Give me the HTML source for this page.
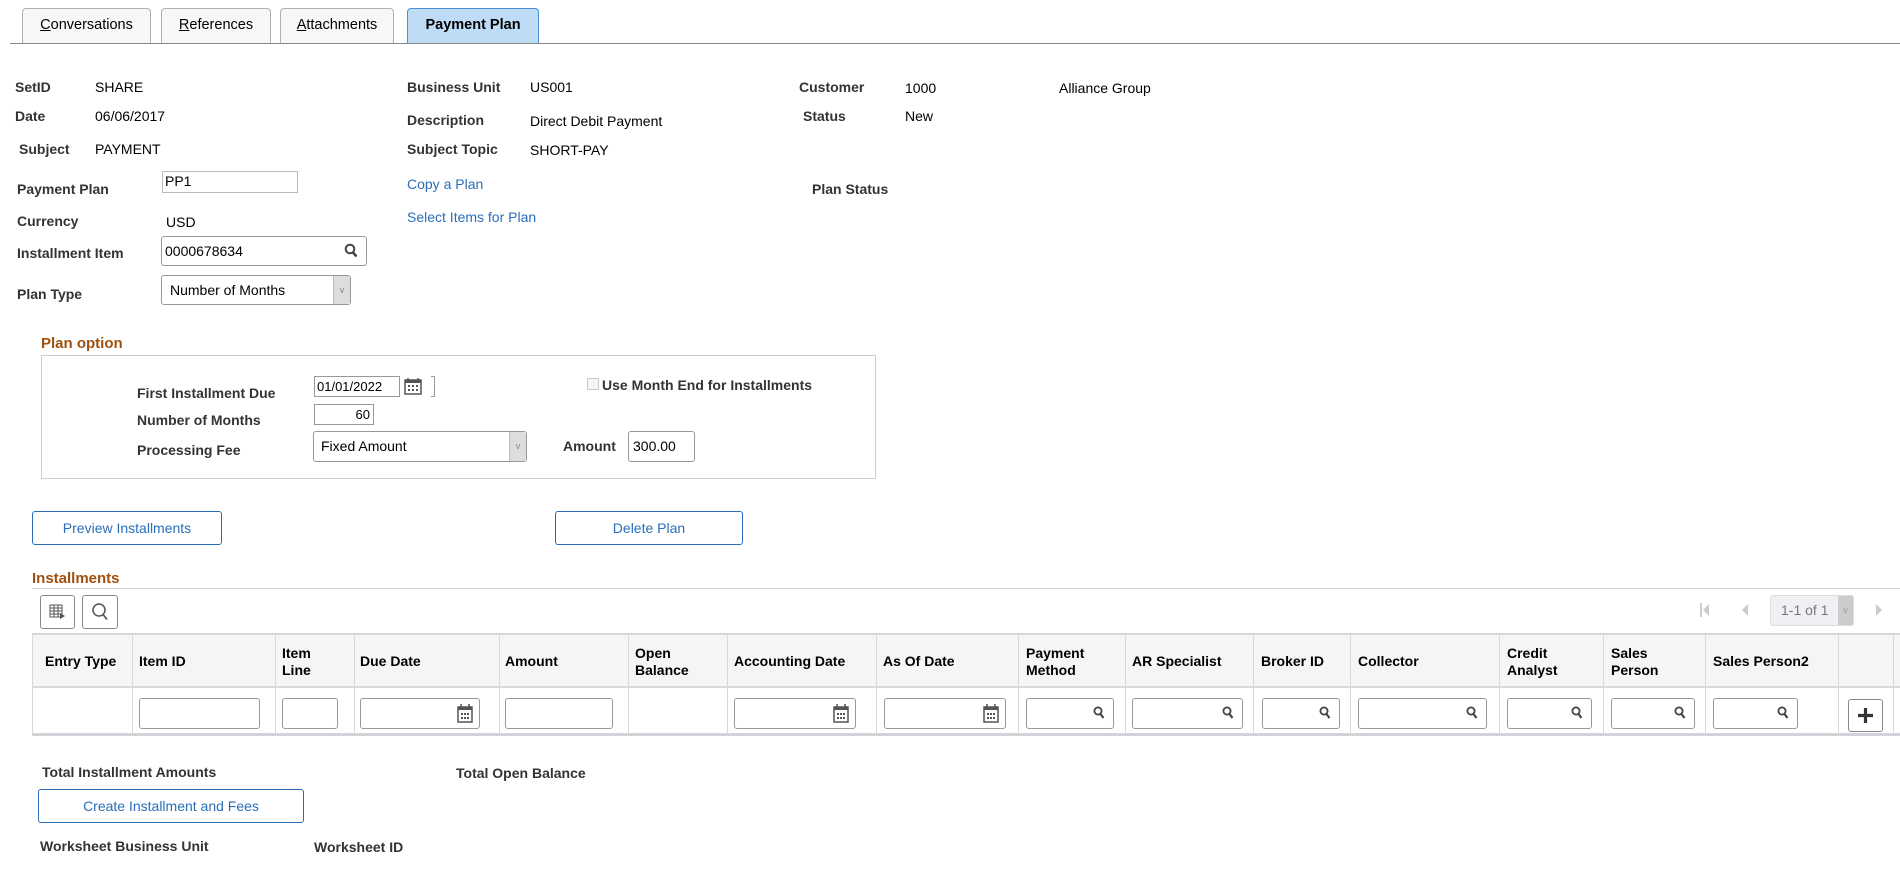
<!DOCTYPE html>
<html><head><meta charset="utf-8"><style>
*{box-sizing:border-box;margin:0;padding:0}
body{width:1900px;height:869px;background:#fff;font-family:"Liberation Sans",Arial,sans-serif;font-size:14px;color:#000;position:relative;overflow:hidden}
.a{position:absolute;line-height:16px;white-space:nowrap}
.l{font-weight:bold;color:#333}
.lk{color:#2a6ebb}
.tab{position:absolute;top:8px;height:35px;border:1px solid #b0b0b0;border-bottom:none;border-radius:4px 4px 0 0;background:#f7f7f7;text-align:center;line-height:33px;font-size:14.5px;color:#000}
.tab u{text-decoration:underline}
.inp{position:absolute;border:1px solid #999;border-radius:3px;background:#fff;padding-left:4px;font-size:14px}
.btn{position:absolute;border:1px solid #2a6ebb;border-radius:3px;background:#fff;color:#2a6ebb;text-align:center;font-size:14px}
.h{position:absolute;color:#a0500e;font-weight:bold;font-size:15px}
.col{position:absolute;top:633px;height:103px;border-left:1px solid #d8d8d8}
.hd{position:absolute;font-weight:bold;font-size:14px;line-height:17px;color:#000}
.srch{position:absolute;right:8px;top:7px}
</style></head><body>
<div class="tab" style="left:22px;width:129px"><u>C</u>onversations</div>
<div class="tab" style="left:161px;width:110px"><u>R</u>eferences</div>
<div class="tab" style="left:280px;width:114px"><u>A</u>ttachments</div>
<div class="tab" style="left:407px;width:132px;background:#bfdcf7;border-color:#4a8fd6;font-weight:bold">Payment Plan</div>
<div style="position:absolute;left:10px;top:43px;width:1890px;height:1px;background:#888"></div>

<div class="a l" style="left:15px;top:79px">SetID</div><div class="a" style="left:95px;top:79px">SHARE</div>
<div class="a l" style="left:15px;top:108px">Date</div><div class="a" style="left:95px;top:108px">06/06/2017</div>
<div class="a l" style="left:19px;top:141px">Subject</div><div class="a" style="left:95px;top:141px">PAYMENT</div>
<div class="a l" style="left:407px;top:79px">Business Unit</div><div class="a" style="left:530px;top:79px">US001</div>
<div class="a l" style="left:407px;top:112px">Description</div><div class="a" style="left:530px;top:113px">Direct Debit Payment</div>
<div class="a l" style="left:407px;top:141px">Subject Topic</div><div class="a" style="left:530px;top:142px">SHORT-PAY</div>
<div class="a l" style="left:799px;top:79px">Customer</div><div class="a" style="left:905px;top:80px">1000</div><div class="a" style="left:1059px;top:80px">Alliance Group</div>
<div class="a l" style="left:803px;top:108px">Status</div><div class="a" style="left:905px;top:108px">New</div>

<div class="a l" style="left:17px;top:181px">Payment Plan</div>
<div class="inp" style="left:162px;top:171px;width:136px;height:22px;border-color:#bbb;border-radius:0;line-height:18px;padding-left:2px">PP1</div>
<div class="a lk" style="left:407px;top:176px">Copy a Plan</div>
<div class="a l" style="left:812px;top:181px">Plan Status</div>
<div class="a l" style="left:17px;top:213px">Currency</div><div class="a" style="left:166px;top:214px">USD</div>
<div class="a lk" style="left:407px;top:209px">Select Items for Plan</div>
<div class="a l" style="left:17px;top:245px">Installment Item</div>
<div class="inp" style="left:161px;top:236px;width:206px;height:30px;line-height:28px;padding-left:3px">0000678634
<svg class="srch" width="14" height="15" viewBox="0 0 14 15" style="top:6px"><circle cx="6" cy="6" r="4.3" fill="none" stroke="#444" stroke-width="2"/><path d="M9 9.5l3.5 4" stroke="#444" stroke-width="2.5"/></svg></div>
<div class="a l" style="left:17px;top:286px">Plan Type</div>
<div class="inp" style="left:161px;top:275px;width:190px;height:30px;line-height:28px;padding-left:8px">Number of Months<div style="position:absolute;right:0;top:0;width:17px;height:28px;background:#ddd;border-left:1px solid #bbb;color:#888;font-size:9px;text-align:center">v</div></div>

<div class="h" style="left:41px;top:335px">Plan option</div>
<div style="position:absolute;left:41px;top:355px;width:835px;height:124px;border:1px solid #ccc"></div>
<div class="a l" style="left:137px;top:385px">First Installment Due</div>
<div class="inp" style="left:314px;top:376px;width:86px;height:21px;line-height:19px;border-radius:0;padding-left:2px;font-size:13px">01/01/2022</div>
<svg style="position:absolute;left:404px;top:377px" width="18" height="18" viewBox="0 0 18 18"><rect x="1" y="3" width="16" height="14" fill="none" stroke="#555" stroke-width="1.5"/><rect x="1" y="3" width="16" height="3" fill="#555"/><path d="M4 1v4M14 1v4" stroke="#555" stroke-width="1.5"/><g fill="#555"><rect x="4" y="8" width="2" height="2"/><rect x="8" y="8" width="2" height="2"/><rect x="12" y="8" width="2" height="2"/><rect x="4" y="12" width="2" height="2"/><rect x="8" y="12" width="2" height="2"/><rect x="12" y="12" width="2" height="2"/></g></svg>
<div style="position:absolute;left:431px;top:376px;width:4px;height:21px;border:1px solid #999;border-left:none"></div>
<div style="position:absolute;left:587px;top:378px;width:12px;height:12px;border:1px solid #ccc;background:#f4f4f4"></div>
<div class="a l" style="left:602px;top:377px">Use Month End for Installments</div>
<div class="a l" style="left:137px;top:412px">Number of Months</div>
<div class="inp" style="left:314px;top:404px;width:60px;height:21px;line-height:19px;border-radius:0;text-align:right;padding-right:3px;font-size:13px">60</div>
<div class="a l" style="left:137px;top:442px">Processing Fee</div>
<div class="inp" style="left:313px;top:431px;width:214px;height:31px;line-height:29px;padding-left:7px">Fixed Amount<div style="position:absolute;right:0;top:0;width:17px;height:29px;background:#ddd;border-left:1px solid #bbb;color:#888;font-size:9px;text-align:center">v</div></div>
<div class="a l" style="left:563px;top:438px">Amount</div>
<div class="inp" style="left:628px;top:431px;width:67px;height:31px;line-height:29px;padding-left:4px">300.00</div>

<div class="btn" style="left:32px;top:511px;width:190px;height:34px;line-height:32px">Preview Installments</div>
<div class="btn" style="left:555px;top:511px;width:188px;height:34px;line-height:32px">Delete Plan</div>

<div class="h" style="left:32px;top:570px">Installments</div>
<div style="position:absolute;left:32px;top:588px;width:1868px;height:1px;background:#d0d0d0"></div>
<div style="position:absolute;left:40px;top:595px;width:35px;height:34px;border:1px solid #888;border-radius:3px"><svg width="33" height="32" viewBox="0 0 33 32"><g fill="none" stroke="#555"><rect x="9" y="9" width="12" height="12"/><path d="M9 12h12M9 15h12M9 18h12M13 9v12M17 9v12"/></g><path d="M19 17l5 3-5 3z" fill="#555"/></svg></div>
<div style="position:absolute;left:82px;top:595px;width:36px;height:34px;border:1px solid #888;border-radius:3px"><svg width="34" height="32" viewBox="0 0 34 32"><circle cx="16" cy="14" r="6" fill="none" stroke="#555" stroke-width="1.5"/><path d="M20 18.5l4 5" stroke="#555" stroke-width="1.8"/></svg></div>
<svg style="position:absolute;left:1700px;top:602px" width="10" height="16"><path d="M1 1v14" stroke="#ccc" stroke-width="2"/><path d="M9 2L3 8l6 6z" fill="#ccc"/></svg>
<svg style="position:absolute;left:1740px;top:602px" width="10" height="16"><path d="M8 2L2 8l6 6z" fill="#ccc"/></svg>
<div style="position:absolute;left:1770px;top:595px;width:84px;height:31px;border:1px solid #ddd;border-radius:3px;background:#eef0f4;color:#777;line-height:29px;padding-left:10px;font-size:14px">1-1 of 1<div style="position:absolute;right:0;top:0;width:15px;height:29px;background:#ccc;color:#999;font-size:9px;text-align:center">v</div></div>
<svg style="position:absolute;left:1874px;top:602px" width="10" height="16"><path d="M2 2l6 6-6 6z" fill="#ccc"/></svg>

<div style="position:absolute;left:32px;top:633px;width:1868px;height:55px;background:#f5f5f5;border-top:2px solid #d8d8d8;border-bottom:2px solid #d8d8d8"></div>
<div style="position:absolute;left:32px;top:688px;width:1868px;height:48px;border-bottom:3px solid #d0d4d8"></div>
<div class="col" style="left:32px"></div><div class="col" style="left:132px"></div><div class="col" style="left:275px"></div><div class="col" style="left:354px"></div><div class="col" style="left:499px"></div><div class="col" style="left:628px"></div><div class="col" style="left:727px"></div><div class="col" style="left:876px"></div><div class="col" style="left:1018px"></div><div class="col" style="left:1125px"></div><div class="col" style="left:1253px"></div><div class="col" style="left:1350px"></div><div class="col" style="left:1499px"></div><div class="col" style="left:1603px"></div><div class="col" style="left:1705px"></div><div class="col" style="left:1838px"></div><div class="col" style="left:1893px"></div>

<div class="hd" style="left:45px;top:653px">Entry Type</div>
<div class="hd" style="left:139px;top:653px">Item ID</div>
<div class="hd" style="left:282px;top:645px">Item<br>Line</div>
<div class="hd" style="left:360px;top:653px">Due Date</div>
<div class="hd" style="left:505px;top:653px">Amount</div>
<div class="hd" style="left:635px;top:645px">Open<br>Balance</div>
<div class="hd" style="left:734px;top:653px">Accounting Date</div>
<div class="hd" style="left:883px;top:653px">As Of Date</div>
<div class="hd" style="left:1026px;top:645px">Payment<br>Method</div>
<div class="hd" style="left:1132px;top:653px">AR Specialist</div>
<div class="hd" style="left:1261px;top:653px">Broker ID</div>
<div class="hd" style="left:1358px;top:653px">Collector</div>
<div class="hd" style="left:1507px;top:645px">Credit<br>Analyst</div>
<div class="hd" style="left:1611px;top:645px">Sales<br>Person</div>
<div class="hd" style="left:1713px;top:653px">Sales Person2</div>

<div class="inp" style="left:139px;top:698px;width:121px;height:31px"></div>
<div class="inp" style="left:282px;top:698px;width:56px;height:31px"></div>
<div class="inp" style="left:360px;top:698px;width:120px;height:31px"><svg style="position:absolute;right:6px;top:5px" width="16" height="19" viewBox="0 0 16 19"><rect x="1" y="3" width="14" height="15" fill="none" stroke="#555" stroke-width="1.5"/><rect x="1" y="3" width="14" height="3" fill="#555"/><path d="M4 0v5M12 0v5" stroke="#555" stroke-width="1.5"/><g fill="#555"><rect x="4" y="9" width="2" height="2"/><rect x="7" y="9" width="2" height="2"/><rect x="10" y="9" width="2" height="2"/><rect x="4" y="13" width="2" height="2"/><rect x="7" y="13" width="2" height="2"/><rect x="10" y="13" width="2" height="2"/></g></svg></div>
<div class="inp" style="left:505px;top:698px;width:108px;height:31px"></div>
<div class="inp" style="left:734px;top:698px;width:122px;height:31px"><svg style="position:absolute;right:6px;top:5px" width="16" height="19" viewBox="0 0 16 19"><rect x="1" y="3" width="14" height="15" fill="none" stroke="#555" stroke-width="1.5"/><rect x="1" y="3" width="14" height="3" fill="#555"/><path d="M4 0v5M12 0v5" stroke="#555" stroke-width="1.5"/><g fill="#555"><rect x="4" y="9" width="2" height="2"/><rect x="7" y="9" width="2" height="2"/><rect x="10" y="9" width="2" height="2"/><rect x="4" y="13" width="2" height="2"/><rect x="7" y="13" width="2" height="2"/><rect x="10" y="13" width="2" height="2"/></g></svg></div>
<div class="inp" style="left:884px;top:698px;width:122px;height:31px"><svg style="position:absolute;right:6px;top:5px" width="16" height="19" viewBox="0 0 16 19"><rect x="1" y="3" width="14" height="15" fill="none" stroke="#555" stroke-width="1.5"/><rect x="1" y="3" width="14" height="3" fill="#555"/><path d="M4 0v5M12 0v5" stroke="#555" stroke-width="1.5"/><g fill="#555"><rect x="4" y="9" width="2" height="2"/><rect x="7" y="9" width="2" height="2"/><rect x="10" y="9" width="2" height="2"/><rect x="4" y="13" width="2" height="2"/><rect x="7" y="13" width="2" height="2"/><rect x="10" y="13" width="2" height="2"/></g></svg></div>
<div class="inp" style="left:1026px;top:698px;width:88px;height:31px"><svg class="srch" width="12" height="14" viewBox="0 0 12 14"><circle cx="5" cy="5" r="3.6" fill="none" stroke="#444" stroke-width="1.8"/><path d="M7.5 8l3 4" stroke="#444" stroke-width="2.2"/></svg></div>
<div class="inp" style="left:1132px;top:698px;width:111px;height:31px"><svg class="srch" width="12" height="14" viewBox="0 0 12 14"><circle cx="5" cy="5" r="3.6" fill="none" stroke="#444" stroke-width="1.8"/><path d="M7.5 8l3 4" stroke="#444" stroke-width="2.2"/></svg></div>
<div class="inp" style="left:1262px;top:698px;width:78px;height:31px"><svg class="srch" width="12" height="14" viewBox="0 0 12 14"><circle cx="5" cy="5" r="3.6" fill="none" stroke="#444" stroke-width="1.8"/><path d="M7.5 8l3 4" stroke="#444" stroke-width="2.2"/></svg></div>
<div class="inp" style="left:1358px;top:698px;width:129px;height:31px"><svg class="srch" width="12" height="14" viewBox="0 0 12 14"><circle cx="5" cy="5" r="3.6" fill="none" stroke="#444" stroke-width="1.8"/><path d="M7.5 8l3 4" stroke="#444" stroke-width="2.2"/></svg></div>
<div class="inp" style="left:1507px;top:698px;width:85px;height:31px"><svg class="srch" width="12" height="14" viewBox="0 0 12 14"><circle cx="5" cy="5" r="3.6" fill="none" stroke="#444" stroke-width="1.8"/><path d="M7.5 8l3 4" stroke="#444" stroke-width="2.2"/></svg></div>
<div class="inp" style="left:1611px;top:698px;width:84px;height:31px"><svg class="srch" width="12" height="14" viewBox="0 0 12 14"><circle cx="5" cy="5" r="3.6" fill="none" stroke="#444" stroke-width="1.8"/><path d="M7.5 8l3 4" stroke="#444" stroke-width="2.2"/></svg></div>
<div class="inp" style="left:1713px;top:698px;width:85px;height:31px"><svg class="srch" width="12" height="14" viewBox="0 0 12 14"><circle cx="5" cy="5" r="3.6" fill="none" stroke="#444" stroke-width="1.8"/><path d="M7.5 8l3 4" stroke="#444" stroke-width="2.2"/></svg></div>
<div style="position:absolute;left:1848px;top:699px;width:35px;height:33px;border:1px solid #888;border-radius:3px"><svg width="33" height="31"><path d="M16.5 8v15M9 15.5h15" stroke="#333" stroke-width="3.2"/></svg></div>

<div class="a l" style="left:42px;top:764px">Total Installment Amounts</div>
<div class="a l" style="left:456px;top:765px">Total Open Balance</div>
<div class="btn" style="left:38px;top:789px;width:266px;height:34px;line-height:32px">Create Installment and Fees</div>
<div class="a l" style="left:40px;top:838px">Worksheet Business Unit</div>
<div class="a l" style="left:314px;top:839px">Worksheet ID</div>
</body></html>
